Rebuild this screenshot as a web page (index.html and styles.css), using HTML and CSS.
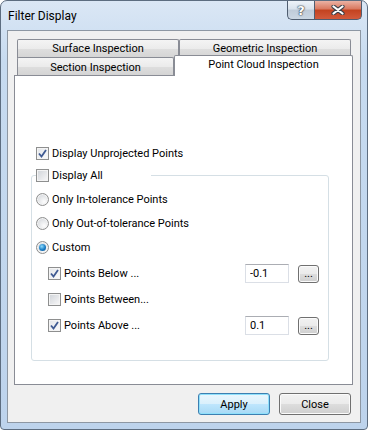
FILE: index.html
```html
<!DOCTYPE html>
<html>
<head>
<meta charset="UTF-8">
<title>Filter Display</title>
<link rel="stylesheet" href="styles.css">
</head>
<body>
<div class="window">
	<div class="titlebar">
		<span class="title">Filter Display</span>
		<div class="caption">
			<span class="cap-help">?</span>
			<span class="cap-close">
				<svg width="14" height="10" viewBox="0 0 14 10"><path d="M2.5 1.5 L11.5 8.5 M11.5 1.5 L2.5 8.5" stroke="#3b3f48" stroke-width="4.2" stroke-linecap="round"/><path d="M2.5 1.5 L11.5 8.5 M11.5 1.5 L2.5 8.5" stroke="#fff" stroke-width="2.2" stroke-linecap="round"/></svg>
			</span>
		</div>
	</div>
	<div class="client">
		<div class="tabrow">
			<div class="tab surface">Surface Inspection</div>
			<div class="tab geometric">Geometric Inspection</div>
		</div>
		<div class="tabrow front">
			<div class="tab section">Section Inspection</div>
			<div class="tab cloud active">Point Cloud Inspection</div>
		</div>
		<div class="panel">
			<div class="row unproj"><span class="cb on"><svg width="11" height="11" viewBox="0 0 11 11"><path d="M2 5.5 L4.5 8.5 L9 2" fill="none" stroke="#3f5a92" stroke-width="1.8"/></svg></span><span class="lbl">Display Unprojected Points</span></div>
			<div class="group">
				<div class="row legend"><span class="cb"></span><span class="lbl">Display All</span></div>
				<div class="row opt"><span class="rb"></span><span class="lbl">Only In-tolerance Points</span></div>
				<div class="row opt"><span class="rb"></span><span class="lbl">Only Out-of-tolerance Points</span></div>
				<div class="row opt"><span class="rb on"><span class="dot"></span></span><span class="lbl">Custom</span></div>
				<div class="row sub first"><span class="cb on"><svg width="11" height="11" viewBox="0 0 11 11"><path d="M2 5.5 L4.5 8.5 L9 2" fill="none" stroke="#3f5a92" stroke-width="1.8"/></svg></span><span class="lbl">Points Below ...</span><input class="field" type="text" value="-0.1" readonly><button class="btn dots">...</button></div>
				<div class="row sub"><span class="cb"></span><span class="lbl">Points Between...</span></div>
				<div class="row sub"><span class="cb on"><svg width="11" height="11" viewBox="0 0 11 11"><path d="M2 5.5 L4.5 8.5 L9 2" fill="none" stroke="#3f5a92" stroke-width="1.8"/></svg></span><span class="lbl">Points Above ...</span><input class="field" type="text" value="0.1" readonly><button class="btn dots">...</button></div>
			</div>
		</div>
		<div class="footer">
			<button class="btn default">Apply</button>
			<button class="btn">Close</button>
		</div>
	</div>
</div>
</body>
</html>
```

FILE: styles.css
```css
body
	{
		margin: 0;
		font-family: Roboto, "Liberation Sans", sans-serif;
		font-size: 11px;
		color: #000;
	}

.window
	{
		width: 368px;
		height: 430px;
		box-sizing: border-box;
		border: 1px solid #5d6d80;
		border-radius: 7px 7px 4px 4px;
		background: linear-gradient(#dbe7f5, #c7dbf0 60px, #bdd3ec);
		display: flex;
		flex-direction: column;
	}

.titlebar
	{
		height: 29px;
		display: flex;
		align-items: flex-start;
	}
.title
	{
		font-size: 12px;
		line-height: 16px;
		margin: 7px 0 0 7px;
	}
.caption
	{
		margin-left: auto;
		margin-right: 5px;
		display: flex;
	}
.cap-help, .cap-close
	{
		height: 19px;
		box-sizing: border-box;
		border: 1px solid #4f5d70;
		border-top: none;
		display: flex;
		align-items: center;
		justify-content: center;
	}
.cap-help
	{
		width: 27px;
		border-right: none;
		border-radius: 0 0 0 5px;
		background: linear-gradient(#eef3f9, #d9e2ec 45%, #bfcbd9 50%, #cbd7e4);
		color: #fff;
		font: bold 13px "DejaVu Sans", sans-serif;
		text-shadow: 0 0 1px #38404c, 0 0 1px #38404c, 0 0 2px #38404c;
	}
.cap-close
	{
		width: 48px;
		border-radius: 0 0 5px 0;
		background: linear-gradient(#ebb2a4, #d9775e 45%, #c3421f 50%, #d25a3c);
	}

.client
	{
		flex: 1;
		margin: 0 6px 6px 6px;
		border: 1px solid #8d97a3;
		background: #f0f0f0;
		padding: 8px 7px 0 6px;
		display: flex;
		flex-direction: column;
	}

.tabrow
	{
		display: flex;
		height: 18px;
		margin-left: 3px;
	}
.tab
	{
		box-sizing: border-box;
		height: 19px;
		border: 1px solid #898c95;
		border-bottom: none;
		border-radius: 2px 2px 0 0;
		background: linear-gradient(#f4f4f4, #ebebeb 50%, #dedede 51%, #d4d4d4);
		text-align: center;
		line-height: 18px;
	}
.tab.surface
	{
		width: 162px;
	}
.tab.geometric
	{
		width: 172px;
	}
.tab.section
	{
		width: 157px;
		height: 18px;
		line-height: 19px;
	}
.tab.cloud
	{
		width: 179px;
	}
.tab.active
	{
		position: relative;
		z-index: 1;
		height: 21px;
		margin-top: -2px;
		background: #fff;
		line-height: 18px;
	}

.panel
	{
		box-sizing: border-box;
		height: 310px;
		border: 1px solid #898c95;
		background: #fff;
		padding: 69px 0 0 16px;
	}

.row
	{
		display: flex;
		align-items: center;
		height: 16px;
	}
.lbl
	{
		margin-left: 3px;
		white-space: nowrap;
	}
.unproj
	{
		margin-left: 5px;
	}

.cb, .rb
	{
		box-sizing: border-box;
		width: 13px;
		height: 13px;
		flex: none;
		border: 1px solid #8e8f8f;
		background: linear-gradient(135deg, #cfd3d8, #f3f3f4 85%);
		box-shadow: inset 0 0 0 1px #f4f4f4;
		display: flex;
		align-items: center;
		justify-content: center;
	}
.cb.on
	{
		background: linear-gradient(135deg, #e2e5e9, #fbfbfb);
	}
.rb
	{
		border-radius: 50%;
		background: radial-gradient(circle at 65% 70%, #fdfdfd, #d6d9dd 80%);
	}
.rb .dot
	{
		width: 7px;
		height: 7px;
		border-radius: 50%;
		background: radial-gradient(circle at 40% 35%, #8fdcfd, #1a7cc4 55%, #0b4c8b);
	}

.group
	{
		box-sizing: border-box;
		width: 298px;
		margin-top: 14px;
		border: 1px solid #d5dfe5;
		border-radius: 3px;
		padding: 0 9px 25px 4px;
	}
.legend
	{
		width: 115px;
		margin-top: -9px;
		background: #fff;
	}
.opt
	{
		margin-top: 8px;
	}
.sub
	{
		height: 19px;
		margin-top: 7px;
		padding-left: 12px;
	}
.sub.first
	{
		margin-top: 9px;
	}

.field
	{
		box-sizing: border-box;
		width: 44px;
		height: 19px;
		margin: 0 0 0 auto;
		padding: 0 0 0 4px;
		border: 1px solid #dbdfe6;
		border-top-color: #abadb3;
		font: inherit;
		color: #000;
		outline: none;
	}

.btn
	{
		box-sizing: border-box;
		width: 72px;
		height: 22px;
		padding: 0;
		border: 1px solid #707070;
		border-radius: 3px;
		background: linear-gradient(#f2f2f2, #ebebeb 50%, #dddddd 51%, #cfcfcf);
		box-shadow: inset 0 0 0 1px #fbfbfb;
		font: inherit;
		color: #000;
	}
.btn.dots
	{
		width: 21px;
		height: 18px;
		margin-left: 9px;
		line-height: 12px;
	}
.btn.default
	{
		border-color: #3c7fb1;
		background: linear-gradient(#eaf6fd, #d9f0fc 50%, #bee6fd 51%, #a7d9f5);
		box-shadow: inset 0 0 0 1px #8fe0fb;
	}

.footer
	{
		display: flex;
		justify-content: flex-end;
		gap: 9px;
		margin-top: 8px;
		padding-right: 2px;
	}
```
